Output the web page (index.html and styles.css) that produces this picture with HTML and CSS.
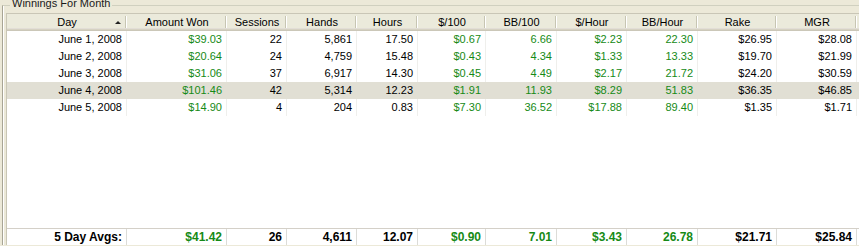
FILE: index.html
```html
<!DOCTYPE html>
<html>
<head>
<meta charset="utf-8">
<link rel="stylesheet" href="styles.css">
</head>
<body>
<div class="group">
  <div class="group-title">Winnings For Month</div>
  <div class="grid">
    <div class="row head">
      <div class="hc sorted">Day<span class="arrow"></span></div>
      <div class="hc">Amount Won</div>
      <div class="hc">Sessions</div>
      <div class="hc">Hands</div>
      <div class="hc">Hours</div>
      <div class="hc">$/100</div>
      <div class="hc">BB/100</div>
      <div class="hc">$/Hour</div>
      <div class="hc">BB/Hour</div>
      <div class="hc">Rake</div>
      <div class="hc">MGR</div>
      <div class="hc last"></div>
    </div>
    <div class="row">
      <div class="c">June 1, 2008</div><div class="c g">$39.03</div><div class="c">22</div><div class="c">5,861</div><div class="c">17.50</div><div class="c g">$0.67</div><div class="c g">6.66</div><div class="c g">$2.23</div><div class="c g">22.30</div><div class="c">$26.95</div><div class="c">$28.08</div><div class="c"></div>
    </div>
    <div class="row">
      <div class="c">June 2, 2008</div><div class="c g">$20.64</div><div class="c">24</div><div class="c">4,759</div><div class="c">15.48</div><div class="c g">$0.43</div><div class="c g">4.34</div><div class="c g">$1.33</div><div class="c g">13.33</div><div class="c">$19.70</div><div class="c">$21.99</div><div class="c"></div>
    </div>
    <div class="row">
      <div class="c">June 3, 2008</div><div class="c g">$31.06</div><div class="c">37</div><div class="c">6,917</div><div class="c">14.30</div><div class="c g">$0.45</div><div class="c g">4.49</div><div class="c g">$2.17</div><div class="c g">21.72</div><div class="c">$24.20</div><div class="c">$30.59</div><div class="c"></div>
    </div>
    <div class="row sel">
      <div class="c">June 4, 2008</div><div class="c g">$101.46</div><div class="c">42</div><div class="c">5,314</div><div class="c">12.23</div><div class="c g">$1.91</div><div class="c g">11.93</div><div class="c g">$8.29</div><div class="c g">51.83</div><div class="c">$36.35</div><div class="c">$46.85</div><div class="c"></div>
    </div>
    <div class="row">
      <div class="c">June 5, 2008</div><div class="c g">$14.90</div><div class="c">4</div><div class="c">204</div><div class="c">0.83</div><div class="c g">$7.30</div><div class="c g">36.52</div><div class="c g">$17.88</div><div class="c g">89.40</div><div class="c">$1.35</div><div class="c">$1.71</div><div class="c"></div>
    </div>
    <div class="filler"></div>
    <div class="row total">
      <div class="c">5 Day Avgs:</div><div class="c g">$41.42</div><div class="c">26</div><div class="c">4,611</div><div class="c">12.07</div><div class="c g">$0.90</div><div class="c g">7.01</div><div class="c g">$3.43</div><div class="c g">26.78</div><div class="c">$21.71</div><div class="c">$25.84</div><div class="c"></div>
    </div>
  </div>
</div>
</body>
</html>
```
FILE: styles.css
```css
html, body {
  margin: 0;
  padding: 0;
}
body {
  width: 859px;
  height: 246px;
  overflow: hidden;
  background: #ece9d8;
  font-family: "Liberation Sans", Arial, sans-serif;
  font-size: 11px;
  color: #000;
}
.group {
  margin: 5px 0 0 2px;
  border-top: 1px solid #d0d0bf;
  border-left: 1px solid #a8a595;
  box-shadow: inset 1px 0 #ffffff;
  padding-left: 3px;
  height: 240px;
  box-sizing: border-box;
}
.group-title {
  margin-top: -9px;
  margin-left: 4px;
  width: fit-content;
  padding: 0 2px;
  line-height: 13px;
  height: 13px;
  background: #ece9d8;
  color: #1a1a1a;
}
.grid {
  margin-top: 3px;
  width: 880px;
  height: 232px;
  box-sizing: border-box;
  border-top: 1px solid #c9c6b6;
  border-left: 1px solid #c9c6b6;
  background: #fff;
  display: flex;
  flex-direction: column;
}
.row {
  display: grid;
  grid-template-columns: 120px 100px 60px 70px 61px 68px 71px 70px 71px 79px 80px 1fr;
  height: 17px;
  flex: none;
}
.head {
  background: #ebeadb;
  box-shadow: inset 0 -1px #cbc7b8, inset 0 -2px #d6d2c2, inset 0 -3px #e2ded6;
}
.hc {
  position: relative;
  text-align: center;
  line-height: 16px;
  background-image: linear-gradient(#c7c5b2, #c7c5b2), linear-gradient(#ffffff, #ffffff);
  background-size: 1px 12px, 1px 12px;
  background-position: right 1px top 2px, right 0 top 2px;
  background-repeat: no-repeat;
}
.hc.last {
  background-image: none;
}
.arrow {
  position: absolute;
  right: 6px;
  top: 7px;
  width: 0;
  height: 0;
  border-left: 3px solid transparent;
  border-right: 3px solid transparent;
  border-bottom: 3px solid #222;
}
.c {
  box-sizing: border-box;
  border-right: 1px solid #efefec;
  text-align: right;
  padding-right: 4px;
  line-height: 17px;
  white-space: nowrap;
  overflow: hidden;
}
.g {
  color: #168a16;
}
.sel {
  background: #e1dfd4;
}
.sel .c {
  border-right-color: #e1dfd4;
}
.filler {
  flex: 1;
  background: #fff;
}
.total {
  border-top: 1px solid #d4d0c8;
  height: 17px;
  box-sizing: border-box;
}
.total .c {
  font-weight: bold;
  font-size: 12px;
  line-height: 16px;
  border-right-color: #dcdcd8;
}
```
